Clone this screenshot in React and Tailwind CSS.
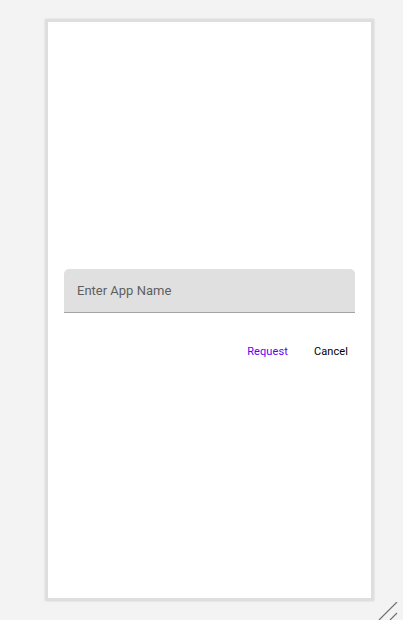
import React from 'react';

const font = { fontFamily: 'Roboto, "Liberation Sans", sans-serif' };

export default function App() {
  return (
    <div className="relative h-[620px] w-[403px] overflow-hidden bg-[#f3f3f3]" style={font}>
      <div className="ml-[45px] mt-[19px] flex h-[582px] w-[329px] flex-col border-[3px] border-[#dedede] bg-white px-4 shadow-[0_0_2px_rgba(0,0,0,0.12)]">
        <div className="mt-[247px] flex h-[44px] items-center rounded-t-[5px] border-b border-[#a3a3a3] bg-[#e0e0e0] px-[13px]">
          <span className="text-[13px] text-[#5f5f5f]">Enter App Name</span>
        </div>
        <div className="mt-[24px] flex justify-end gap-[10px]">
          <button className="px-2 py-[8px] text-[11px] leading-[14px] tracking-[0.1px] text-[#6200ee]">Request</button>
          <button className="pl-2 pr-[7px] py-[8px] text-[11px] leading-[14px] tracking-[0.1px] text-black">Cancel</button>
        </div>
      </div>
      <svg className="absolute bottom-0 right-[5px]" width="20" height="18" viewBox="0 0 20 18">
        <path d="M1 18 L19 0 M12 18 L19 11" stroke="#707070" strokeWidth="1.2" fill="none" />
      </svg>
    </div>
  );
}
